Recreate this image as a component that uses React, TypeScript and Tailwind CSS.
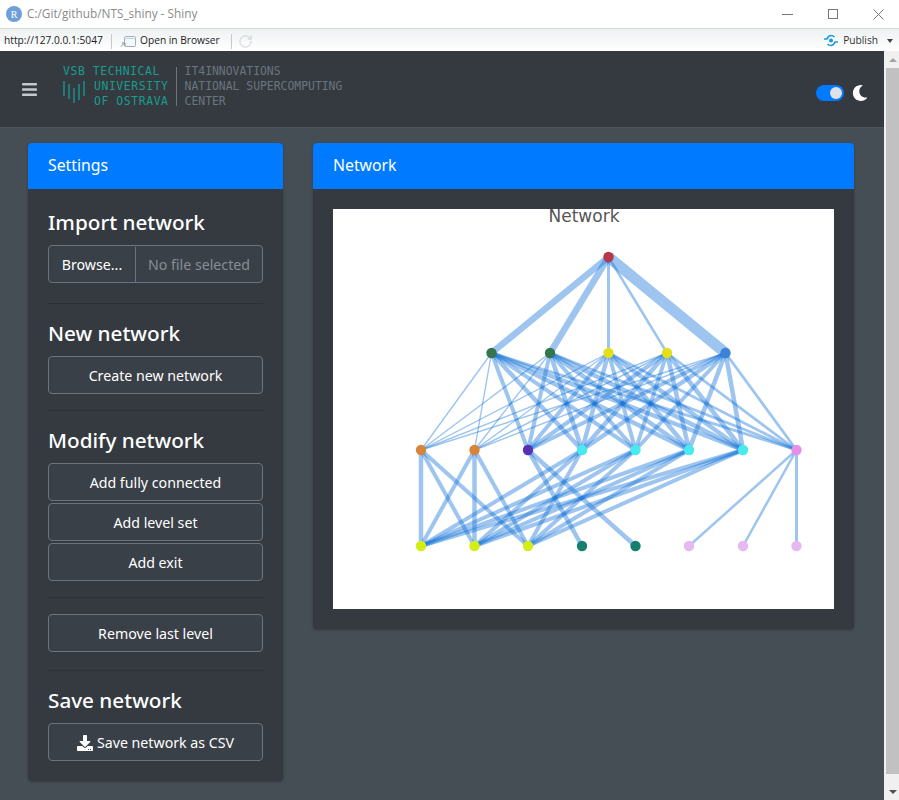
import { FaBars, FaDownload, FaMoon } from 'react-icons/fa';
import { RotateCw } from 'lucide-react';

const level1 = [491.5, 550, 608.5, 667, 725.5];
const level2 = [421, 474.5, 528, 582, 635.5, 689, 743, 796.5];
const level3 = [421, 474.5, 528, 582, 635.5, 689, 743, 796.5];

const rootWidths = [6.5, 6.5, 3, 2.5, 11];
const l1ToL2 = [1.4, 1.4, 4, 4.5, 4, 4.5, 4.5, 2.8];

// source index on level 2, target index on level 3, width
const l2ToL3: [number, number, number][] = [
  [0, 0, 4.5], [0, 1, 4], [0, 2, 4],
  [1, 0, 4], [1, 1, 4.5], [1, 2, 4],
  [2, 3, 4.5], [2, 4, 4.5],
  [3, 0, 4], [3, 1, 4], [3, 2, 4],
  [4, 0, 4], [4, 1, 4], [4, 2, 4],
  [5, 0, 4], [5, 1, 4], [5, 2, 4],
  [6, 0, 4], [6, 1, 4], [6, 2, 4],
  [7, 5, 2.5], [7, 6, 2.5], [7, 7, 3],
];

const l1Colors = ['#35754e', '#35754e', '#e3e019', '#e3e019', '#3b82d8'];
const l2Colors = ['#d8853a', '#d8853a', '#5533b0', '#48eaee', '#48eaee', '#48eaee', '#48eaee', '#e98ee8'];
const l3Colors = ['#d2ee14', '#d2ee14', '#d2ee14', '#15806f', '#15806f', '#e6b9f0', '#e6b9f0', '#e6b9f0'];

function NetworkPlot() {
  const edges: { x1: number; y1: number; x2: number; y2: number; w: number }[] = [];
  level1.forEach((x, i) => edges.push({ x1: 608.5, y1: 257, x2: x, y2: 353, w: rootWidths[i] }));
  level1.forEach((a) => {
    level2.forEach((b, j) => edges.push({ x1: a, y1: 353, x2: b, y2: 450, w: l1ToL2[j] }));
  });
  l2ToL3.forEach(([a, b, w]) => edges.push({ x1: level2[a], y1: 450, x2: level3[b], y2: 546, w }));

  return (
    <svg width="501" height="400" viewBox="333 209 501 400" className="block bg-white">
      <text x="584" y="222" textAnchor="middle" fontSize="17" fill="#555" style={{ fontFamily: "'DejaVu Sans', sans-serif" }}>
        Network
      </text>
      {edges.map((e, i) => (
        <line key={i} x1={e.x1} y1={e.y1} x2={e.x2} y2={e.y2} stroke="#0a6fd6" strokeOpacity="0.4" strokeWidth={e.w} />
      ))}
      <circle cx="608.5" cy="257" r="5.2" fill="#b8354a" />
      {level1.map((x, i) => <circle key={x} cx={x} cy="353" r="5.2" fill={l1Colors[i]} />)}
      {level2.map((x, i) => <circle key={x} cx={x} cy="450" r="5.2" fill={l2Colors[i]} />)}
      {level3.map((x, i) => <circle key={x} cx={x} cy="546" r="5.2" fill={l3Colors[i]} />)}
    </svg>
  );
}

function Heading({ children }: { children: React.ReactNode }) {
  return <h4 className="text-[20.7px] leading-[27px] mb-[9px] font-medium text-white">{children}</h4>;
}

function Btn({ children }: { children: React.ReactNode }) {
  return (
    <button className="w-full h-[38px] pt-[1px] flex items-center justify-center gap-1 rounded border border-[#6c757d] bg-[#3a4047] text-[14.2px] text-white">
      {children}
    </button>
  );
}

function TitleBar() {
  return (
    <div className="h-[29px] bg-white border-b border-[#d9d9d9] flex items-center pl-[6px] pr-[15px]">
      <div className="w-4 h-4 rounded-full bg-[#6f9fd8] flex items-center justify-center text-[10px] text-white font-['Liberation_Serif',serif]">R</div>
      <span className="ml-[5px] text-[11.8px] text-[#8a8a8a] font-['Open_Sans',sans-serif]">C:/Git/github/NTS_shiny - Shiny</span>
      <div className="ml-auto flex items-center gap-[35px]">
        <div className="w-[11px] h-px bg-[#777]" />
        <div className="w-[10px] h-[10px] border border-[#777]" />
        <svg width="11" height="11" viewBox="0 0 11 11" stroke="#777" strokeWidth="1"><path d="M0.5 0.5L10.5 10.5M10.5 0.5L0.5 10.5" /></svg>
      </div>
    </div>
  );
}

function ToolBar() {
  return (
    <div className="h-[22px] bg-gradient-to-b from-[#eef1f2] to-white flex items-center pl-[4px] pr-[6px] pt-[2px] text-[10.2px] text-[#222] font-['Open_Sans',sans-serif]">
      <span className="w-[107px] whitespace-nowrap">http://127.0.0.1:5047</span>
      <div className="h-[15px] w-px bg-[#c8c8c8]" />
      <svg width="16" height="13" viewBox="0 0 16 13" className="ml-[8px]" fill="none">
        <rect x="4.5" y="1.5" width="11" height="10" rx="1" fill="#f6f9fc" stroke="#9db0c2" />
        <path d="M4.5 3.5h11" stroke="#bcd0e2" />
        <path d="M1 11.5l3-3M2 8h3v3" stroke="#8e8e8e" />
      </svg>
      <span className="ml-[4px] w-[91px] whitespace-nowrap">Open in Browser</span>
      <div className="h-[15px] w-px bg-[#c8c8c8]" />
      <RotateCw size={15} strokeWidth={1.5} color="#c3ccd3" className="ml-[6px]" />
      <div className="ml-auto flex items-center">
        <svg width="16" height="13" viewBox="0 0 16 13" fill="none" stroke="#1d9be0" strokeWidth="1.7">
          <path d="M1 5h3c1-2.500 2.500-3.500 4-3.500s2.500 .5 3.500 1.500" />
          <path d="M15 8h-3c-1 2.500-2.500 3.500-4 3.500S5.500 11 4.500 10" />
          <circle cx="8" cy="6.500" r="2" fill="#1d9be0" stroke="none" />
        </svg>
        <span className="ml-[4px] text-[#333]">Publish</span>
        <div className="ml-[9px] border-x-[3px] border-x-transparent border-t-[4px] border-t-[#444]" />
      </div>
    </div>
  );
}

function LogoBars() {
  return (
    <svg width="22" height="24" viewBox="0 0 22 24" stroke="#17978a" strokeWidth="1.4">
      <path d="M1 1v15M6 4v15M11 8v15M16 4v16M21 1v15" />
    </svg>
  );
}

function Navbar() {
  return (
    <div className="h-[77px] bg-[#343a40] border-b border-[#4b545c] flex items-center pl-[21px] pr-[16px] pb-[6px]">
      <div className="mt-[6px]"><FaBars size={17} className="text-[#c2c7d0]" /></div>
      <div className="ml-[25px] grid grid-cols-[31px_auto] text-[11.4px] leading-[15px] tracking-[0.6px] text-[#1a9c8e] font-['DejaVu_Sans_Mono',monospace]">
        <div className="col-span-2 leading-[15px]">VSB TECHNICAL</div>
        <div className="pt-[1px]"><LogoBars /></div>
        <div>UNIVERSITY<br />OF OSTRAVA</div>
      </div>
      <div className="ml-[7px] h-[39px] w-px bg-[#6c757d]" />
      <div className="ml-[8px] text-[11.4px] leading-[15px] text-[#6c757d] font-['DejaVu_Sans_Mono',monospace]">
        IT4INNOVATIONS<br />NATIONAL SUPERCOMPUTING<br />CENTER
      </div>
      <div className="ml-auto flex items-center gap-2 mt-[14px]">
        <div className="w-7 h-4 rounded-full bg-[#007bff] flex items-center justify-end pr-[2px]">
          <div className="w-3 h-3 rounded-full bg-[#dee2e6]" />
        </div>
        <FaMoon size={16} className="text-white" />
      </div>
    </div>
  );
}

function Sidebar() {
  return (
    <div className="w-[255px] bg-[#343a40] rounded shadow shadow-black/20">
      <div className="h-[46px] bg-[#007bff] rounded-t flex items-center px-5 text-[15.8px] text-white">Settings</div>
      <div className="p-5">
        <Heading>Import network</Heading>
        <div className="flex h-[38px] pt-[1px] rounded border border-[#6c757d] bg-[#3a4047] text-[14.2px]">
          <div className="w-[87px] border-r border-[#6c757d] flex items-center justify-center text-white">Browse...</div>
          <div className="flex-1 flex items-center justify-center text-[#868e96]">No file selected</div>
        </div>
        <hr className="mt-5 mb-4 border-[#2c3136]" />
        <Heading>New network</Heading>
        <Btn>Create new network</Btn>
        <hr className="mt-4 mb-4 border-[#2c3136]" />
        <Heading>Modify network</Heading>
        <div className="flex flex-col gap-[2px]">
          <Btn>Add fully connected</Btn>
          <Btn>Add level set</Btn>
          <Btn>Add exit</Btn>
        </div>
        <hr className="mt-4 mb-4 border-[#2c3136]" />
        <Btn>Remove last level</Btn>
        <hr className="mt-[18px] mb-4 border-[#2c3136]" />
        <Heading>Save network</Heading>
        <Btn><FaDownload size={16} />Save network as CSV</Btn>
      </div>
    </div>
  );
}

function Scrollbar() {
  return (
    <div className="w-[15px] bg-[#f0f0f0] flex flex-col pl-[2px]">
      <div className="h-[17px] flex items-center justify-center">
        <div className="border-x-[4px] border-x-transparent border-b-[4px] border-b-[#a3a3a3]" />
      </div>
      <div className="flex-1 bg-[#c1c1c1]" />
      <div className="h-[26px] flex items-end justify-center pb-[6px]">
        <div className="border-x-[4px] border-x-transparent border-t-[4px] border-t-[#505050]" />
      </div>
    </div>
  );
}

export default function App() {
  return (
    <div className="w-[899px] h-[800px] overflow-hidden flex flex-col font-['Noto_Sans',sans-serif]">
      <TitleBar />
      <ToolBar />
      <div className="flex-1 flex min-h-0">
        <div className="flex-1 flex flex-col bg-[#454d55] min-w-0">
          <Navbar />
          <div className="flex items-start gap-[30px] pt-[15px] pl-7">
            <Sidebar />
            <div className="w-[541px] bg-[#343a40] rounded shadow shadow-black/20">
              <div className="h-[46px] bg-[#007bff] rounded-t flex items-center px-5 text-[15.8px] text-white">Network</div>
              <div className="p-5">
                <NetworkPlot />
              </div>
            </div>
          </div>
        </div>
        <Scrollbar />
      </div>
    </div>
  );
}
